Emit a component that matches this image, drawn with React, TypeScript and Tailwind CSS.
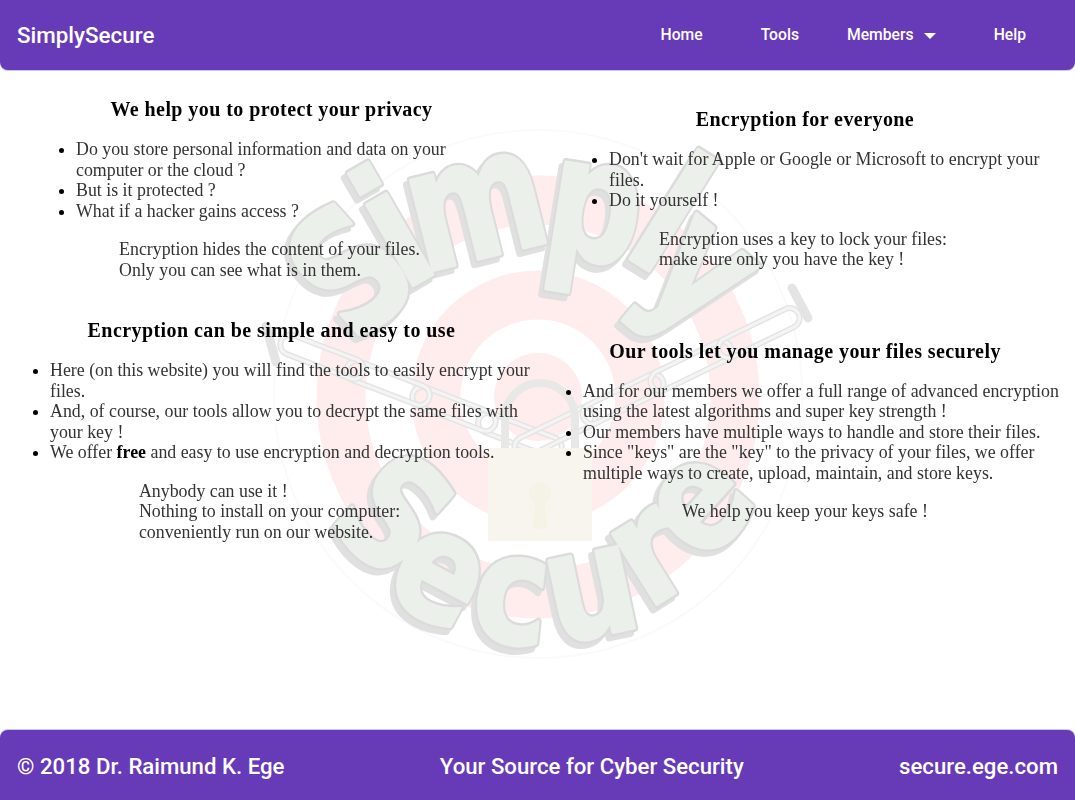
const simply = [
  { ch: "S", x: 360, y: 280, r: -42 },
  { ch: "i", x: 400, y: 240, r: -30 },
  { ch: "m", x: 478, y: 212, r: -14 },
  { ch: "p", x: 594, y: 214, r: 9 },
  { ch: "l", x: 664, y: 226, r: 32 },
  { ch: "y", x: 698, y: 276, r: 40 },
];

const secure = [
  { ch: "S", x: 396, y: 512, r: 42 },
  { ch: "e", x: 438, y: 578, r: 28 },
  { ch: "c", x: 511, y: 601, r: 6 },
  { ch: "u", x: 592, y: 594, r: -12 },
  { ch: "r", x: 652, y: 558, r: -32 },
  { ch: "e", x: 702, y: 506, r: -48 },
];

function Letters({ stroke, width, fill }: { stroke: string; width: number; fill: string }) {
  return (
    <g fill={fill} stroke={stroke} strokeWidth={width} strokeLinejoin="round" textAnchor="middle">
      {simply.map((l) => (
        <text key={l.ch} fontSize="170" y="46" transform={`translate(${l.x} ${l.y}) rotate(${l.r}) scale(0.78 1)`}>
          {l.ch}
        </text>
      ))}
      {secure.map((l, i) => (
        <text key={i} fontSize="152" y={l.ch === "S" ? 56 : 42} transform={`translate(${l.x} ${l.y}) rotate(${l.r}) scale(0.84 1)`}>
          {l.ch}
        </text>
      ))}
    </g>
  );
}

function Watermark() {
  const left = [0, 1, 2, 3].map((i) => ({ x: 520 - 66 * i, y: 435 - 26 * i }));
  const right = [0, 1, 2, 3].map((i) => ({ x: 555 + 68 * i, y: 432 - 33 * i }));
  return (
    <svg viewBox="0 0 1075 660" className="absolute left-0 top-0 h-[660px] w-[1075px]" aria-hidden="true">
      <g transform="translate(0,-70)">
        <circle cx="538" cy="394" r="264" fill="#ffffff" stroke="#fafafa" strokeWidth="2" />
        <circle cx="538" cy="397" r="197" fill="none" stroke="#ffecec" strokeWidth="49" />
        <circle cx="538" cy="397" r="102" fill="none" stroke="#ffecec" strokeWidth="49" />
        <circle cx="538" cy="397" r="44" fill="#ffecec" />
        {left.map((l, i) => (
          <g key={i} transform={`translate(${l.x} ${l.y}) rotate(21)`} fill="none">
            <rect x="-44" y="-10" width="88" height="20" rx="10" stroke="#e4e4e4" strokeWidth="6" />
            <rect x="-44" y="-10" width="88" height="20" rx="10" stroke="#f4f4f4" strokeWidth="3" />
          </g>
        ))}
        {right.map((l, i) => (
          <g key={i} transform={`translate(${l.x} ${l.y}) rotate(-26)`} fill="none">
            <rect x="-44" y="-10" width="88" height="20" rx="10" stroke="#e4e4e4" strokeWidth="6" />
            <rect x="-44" y="-10" width="88" height="20" rx="10" stroke="#f4f4f4" strokeWidth="3" />
          </g>
        ))}
        <path d="M266 326 L276 362" stroke="#e4e4e4" strokeWidth="9" strokeLinecap="round" />
        <path d="M792 288 L808 318" stroke="#e4e4e4" strokeWidth="9" strokeLinecap="round" />
        <path d="M505 450 V418 a35 35 0 0 1 70 0 V450" fill="none" stroke="#e8e8e6" strokeWidth="8" />
        <rect x="488" y="448" width="104" height="93" fill="#f8f5ef" />
        <circle cx="540" cy="493" r="11" fill="#f5f3e6" />
        <path d="M536 498 H544 L548 529 H532 Z" fill="#f5f3e6" />
        <g className="font-['DejaVu_Sans',sans-serif] font-bold drop-shadow-[-4px_5px_0_#e0e0e0]">
          <Letters stroke="#dbdbdb" width={8} fill="#dbdbdb" />
          <Letters stroke="#ecf0ea" width={3} fill="#ecf0ea" />
        </g>
      </g>
    </svg>
  );
}

function Heading({ children }: { children: React.ReactNode }) {
  return <h2 className="mb-[18px] text-center text-[20px] font-bold leading-[23px] tracking-[0.43px] text-black">{children}</h2>;
}

function Bullets({ items }: { items: React.ReactNode[] }) {
  return (
    <ul className="list-disc pl-10">
      {items.map((item, i) => (
        <li key={i}>
          <span className="text-[#333]">{item}</span>
        </li>
      ))}
    </ul>
  );
}

function Note({ lines, className = "pr-[4px]" }: { lines: string[]; className?: string }) {
  return (
    <p className={`mx-auto mt-[18px] w-fit text-[#333] ${className}`}>
      {lines.map((line) => (
        <span key={line} className="block">
          {line}
        </span>
      ))}
    </p>
  );
}

export default function App() {
  return (
    <div className="flex h-screen flex-col bg-white font-['Liberation_Serif',serif] text-[17.85px] leading-[20.5px] text-black">
      <header className="flex h-[70px] shrink-0 items-center justify-between rounded-b-lg bg-[#673ab7] pl-[17px] pr-[49px] pt-[1px] font-['Roboto',sans-serif] font-medium text-white shadow-[0_1px_1px_#c9bfdc]">
        <span className="text-[22.4px]">SimplySecure</span>
        <nav className="flex items-center text-[15.7px]">
          <a>Home</a>
          <a className="ml-[58px]">Tools</a>
          <a className="ml-[48px] flex items-center">
            Members
            <svg viewBox="0 0 12 6" className="ml-[10px] h-[6px] w-[12px]" fill="#fff">
              <path d="M0 0H12L6 6Z" />
            </svg>
          </a>
          <a className="ml-[58px]">Help</a>
        </nav>
      </header>

      <main className="relative flex-1 overflow-hidden">
        <Watermark />
        <div className="relative grid grid-cols-[537px_538px]">
          <div className="pl-[10px] pr-[4px] pt-[28px]">
            <section className="mx-auto w-[471px]">
              <Heading>We help you to protect your privacy</Heading>
              <Bullets
                items={[
                  "Do you store personal information and data on your computer or the cloud ?",
                  "But is it protected ?",
                  "What if a hacker gains access ?",
                ]}
              />
              <Note lines={["Encryption hides the content of your files.", "Only you can see what is in them."]} />
            </section>
            <section className="mt-[39px]">
              <Heading>Encryption can be simple and easy to use</Heading>
              <Bullets
                items={[
                  "Here (on this website) you will find the tools to easily encrypt your files.",
                  "And, of course, our tools allow you to decrypt the same files with your key !",
                  <>
                    We offer <b className="text-black">free</b> and easy to use encryption and decryption tools.
                  </>,
                ]}
              />
              <Note lines={["Anybody can use it !", "Nothing to install on your computer:", "conveniently run on our website."]} />
            </section>
          </div>
          <div className="pl-[6px] pr-[8px] pt-[38px]">
            <section className="mx-auto w-[472px]">
              <Heading>Encryption for everyone</Heading>
              <Bullets
                items={["Don't wait for Apple or Google or Microsoft to encrypt your files.", "Do it yourself !"]}
              />
              <Note lines={["Encryption uses a key to lock your files:", "make sure only you have the key !"]} />
            </section>
            <section className="mt-[70px]">
              <Heading>Our tools let you manage your files securely</Heading>
              <Bullets
                items={[
                  "And for our members we offer a full range of advanced encryption using the latest algorithms and super key strength !",
                  "Our members have multiple ways to handle and store their files.",
                  'Since "keys" are the "key" to the privacy of your files, we offer multiple ways to create, upload, maintain, and store keys.',
                ]}
              />
              <Note className="" lines={["We help you keep your keys safe !"]} />
            </section>
          </div>
        </div>
      </main>

      <footer className="flex h-[70px] shrink-0 items-center justify-between rounded-t-lg bg-[#673ab7] px-[17px] pt-[2px] font-['Roboto',sans-serif] text-[22.2px] font-medium text-white shadow-[0_-1px_1px_#c9bfdc]">
        <span>© 2018 Dr. Raimund K. Ege</span>
        <span>Your Source for Cyber Security</span>
        <span>secure.ege.com</span>
      </footer>
    </div>
  );
}
